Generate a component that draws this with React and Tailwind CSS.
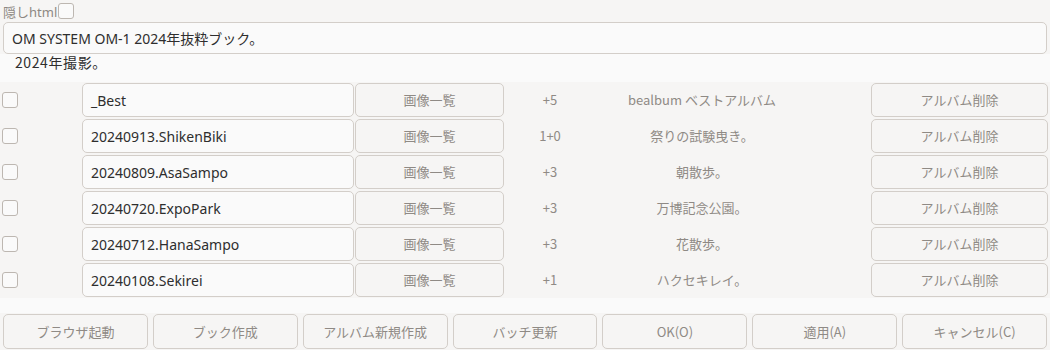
import React from 'react';

const albums = [
    { name: '_Best', count: '+5', desc: 'bealbum ベストアルバム' },
    { name: '20240913.ShikenBiki', count: '1+0', desc: '祭りの試験曳き。' },
    { name: '20240809.AsaSampo', count: '+3', desc: '朝散歩。' },
    { name: '20240720.ExpoPark', count: '+3', desc: '万博記念公園。' },
    { name: '20240712.HanaSampo', count: '+3', desc: '花散歩。' },
    { name: '20240108.Sekirei', count: '+1', desc: 'ハクセキレイ。' },
];

const footerButtons = ['ブラウザ起動', 'ブック作成', 'アルバム新規作成', 'バッチ更新', 'OK(O)', '適用(A)', 'キャンセル(C)'];

function Check() {
    return <span className="block w-4 h-4 rounded-[3px] border border-[#bdb7b1] bg-[#fafafa]" />;
}

function GrayButton({ children, className }) {
    return (
        <div className={`flex items-center justify-center rounded-[5px] border border-[#d3cec9] bg-[#f6f5f4] text-[13px] text-[#8f8a85] font-['Noto_Sans_CJK_JP',sans-serif] ${className}`}>
            {children}
        </div>
    );
}

const App = () => {
    return (
        <div className="w-[1050px] h-[350px] overflow-hidden bg-[#f6f5f4] font-['Noto_Sans','Noto_Sans_CJK_JP',sans-serif]">
            {/* header */}
            <div className="h-[22px] flex items-start pl-[3px] pt-[3px]">
                <span className="text-[13px] leading-[17px] text-[#8d8883] mt-[1px]">隠しhtml</span>
                <span className="ml-[1px]"><Check /></span>
            </div>
            <div className="px-[3px]">
                <div className="h-[32px] flex items-center rounded-[5px] border border-[#d3cec9] bg-[#fafafa] pl-[8px] text-[14px] text-[#2e2e2e]">
                    OM SYSTEM OM-1 2024年抜粋ブック。
                </div>
            </div>
            <div className="h-[28px] bg-[#fafafa] pl-[15px] text-[14px] leading-[17px] tracking-[0.6px] text-[#2e2e2e] font-['Noto_Sans_CJK_JP',sans-serif]">
                2024年撮影。
            </div>

            {/* albums */}
            {albums.map((a) => (
                <div key={a.name} className="h-[36px] flex items-center">
                    <div className="w-[82px] pl-[2px]"><Check /></div>
                    <div className="w-[272px] h-[34px] flex items-center rounded-[5px] border border-[#d3cec9] bg-[#fafafa] pl-[8px] text-[14px] text-[#2e2e2e]">
                        {a.name}
                    </div>
                    <GrayButton className="w-[149px] h-[34px] ml-[1px]">画像一覧</GrayButton>
                    <div className="w-[92px] text-center text-[13px] text-[#8f8a85] font-['Noto_Sans_CJK_JP',sans-serif]">{a.count}</div>
                    <div className="w-[212px] text-center text-[13px] text-[#8f8a85] font-['Noto_Sans_CJK_JP',sans-serif]">{a.desc}</div>
                    <div className="flex-1" />
                    <GrayButton className="w-[177px] h-[34px] mr-[2px]">アルバム削除</GrayButton>
                </div>
            ))}

            <div className="h-[15px] bg-[#fafafa]" />

            {/* footer */}
            <div className="flex gap-[5px] px-[3px] mt-[1px]">
                {footerButtons.map((b) => (
                    <GrayButton key={b} className="flex-1 h-[35px]">{b}</GrayButton>
                ))}
            </div>
        </div>
    );
};

export default App;
